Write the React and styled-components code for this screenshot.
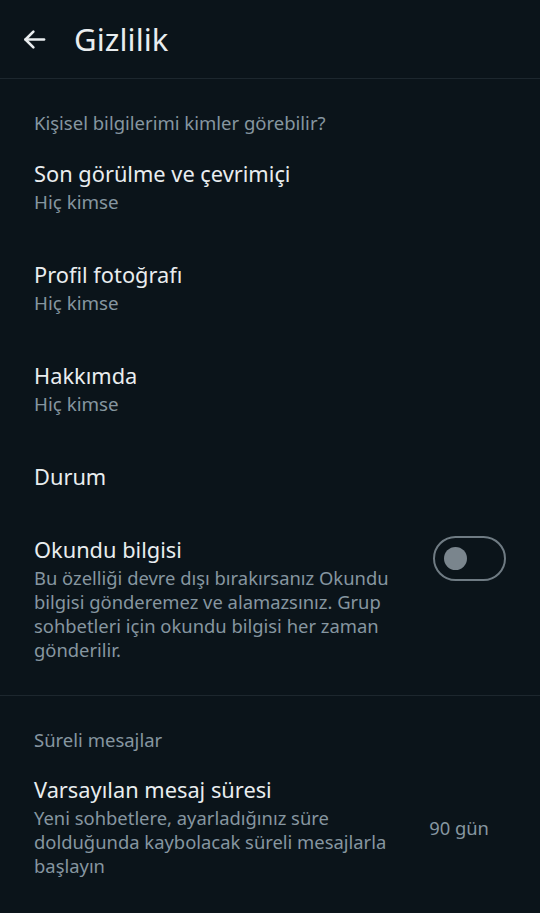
import React from "react";
import styled, { createGlobalStyle } from "styled-components";

const Global = createGlobalStyle`
  html, body { margin: 0; padding: 0; background: #0b141a; }
  body { font-family: "Noto Sans", "Open Sans", sans-serif; -webkit-font-smoothing: antialiased; }
  * { box-sizing: border-box; }
`;

const Page = styled.div`
  width: 540px;
  min-height: 913px;
  background: #0b141a;
  color: #e9edef;
  display: flex;
  flex-direction: column;
`;

const Header = styled.header`
  height: 79px;
  display: flex;
  align-items: center;
  padding-left: 19px;
  gap: 25px;
  border-bottom: 1px solid #1d272e;
`;

const BackButton = styled.button`
  width: 30px;
  height: 30px;
  padding: 0;
  border: none;
  background: none;
  color: #e9edef;
  display: flex;
  align-items: center;
  justify-content: center;
`;

const Title = styled.h1`
  margin: 0;
  font-size: 31px;
  font-weight: 400;
  line-height: 40px;
  color: #e9edef;
  letter-spacing: 0.1px;
`;

const Section = styled.section`
  padding: ${(p) => p.$top}px 0 ${(p) => p.$bottom}px;
  border-bottom: 1px solid #1d272e;
`;

const SectionLabel = styled.div`
  padding: 0 34px;
  font-size: 18.5px;
  line-height: 24px;
  color: #8696a0;
`;

const Row = styled.div`
  display: flex;
  align-items: center;
  gap: 20px;
  padding: ${(p) => p.$top || 22}px 34px 23px 34px;
`;

const RowText = styled.div`
  flex: 1;
  display: flex;
  flex-direction: column;
`;

const RowTitle = styled.div`
  font-size: 21.8px;
  line-height: 28px;
  color: #e9edef;
`;

const RowSub = styled.div`
  font-size: 18.8px;
  line-height: 28px;
  color: #8696a0;
`;

const RowDesc = styled.div`
  margin-top: 2px;
  font-size: 18.4px;
  line-height: 24px;
  color: #8696a0;
  max-width: ${(p) => p.$max}px;
`;

const Value = styled.div`
  font-size: 18.4px;
  color: #8696a0;
  padding-right: 17px;
`;

const Toggle = styled.div`
  flex: none;
  align-self: flex-start;
  width: 73px;
  height: 45px;
  border: 2.5px solid #6f7b83;
  border-radius: 23px;
  display: flex;
  align-items: center;
  padding-left: 9px;
  margin-right: 0;
`;

const Knob = styled.div`
  width: 23px;
  height: 23px;
  border-radius: 50%;
  background: #7a858d;
`;

function ArrowLeft() {
  return (
    <svg width="27" height="27" viewBox="0 0 24 24" fill="none" stroke="currentColor" strokeWidth="2.3" strokeLinecap="round" strokeLinejoin="round">
      <path d="M20.5 12H4" />
      <path d="M11 5l-7 7 7 7" />
    </svg>
  );
}

export default function App() {
  return (
    <>
      <Global />
      <Page>
        <Header>
          <BackButton aria-label="Geri">
            <ArrowLeft />
          </BackButton>
          <Title>Gizlilik</Title>
        </Header>

        <Section $top={32} $bottom={10}>
          <SectionLabel>Kişisel bilgilerimi kimler görebilir?</SectionLabel>
          <Row $top={25}>
            <RowText>
              <RowTitle>Son görülme ve çevrimiçi</RowTitle>
              <RowSub>Hiç kimse</RowSub>
            </RowText>
          </Row>
          <Row>
            <RowText>
              <RowTitle>Profil fotoğrafı</RowTitle>
              <RowSub>Hiç kimse</RowSub>
            </RowText>
          </Row>
          <Row>
            <RowText>
              <RowTitle>Hakkımda</RowTitle>
              <RowSub>Hiç kimse</RowSub>
            </RowText>
          </Row>
          <Row>
            <RowText>
              <RowTitle>Durum</RowTitle>
            </RowText>
          </Row>
          <Row>
            <RowText>
              <RowTitle>Okundu bilgisi</RowTitle>
              <RowDesc $max={370}>
                Bu özelliği devre dışı bırakırsanız Okundu bilgisi gönderemez ve alamazsınız. Grup sohbetleri için okundu bilgisi her zaman gönderilir.
              </RowDesc>
            </RowText>
            <Toggle>
              <Knob />
            </Toggle>
          </Row>
        </Section>

        <Section $top={32} $bottom={13}>
          <SectionLabel>Süreli mesajlar</SectionLabel>
          <Row $top={24}>
            <RowText>
              <RowTitle>Varsayılan mesaj süresi</RowTitle>
              <RowDesc $max={370}>
                Yeni sohbetlere, ayarladığınız süre dolduğunda kaybolacak süreli mesajlarla başlayın
              </RowDesc>
            </RowText>
            <Value>90 gün</Value>
          </Row>
        </Section>
      </Page>
    </>
  );
}
